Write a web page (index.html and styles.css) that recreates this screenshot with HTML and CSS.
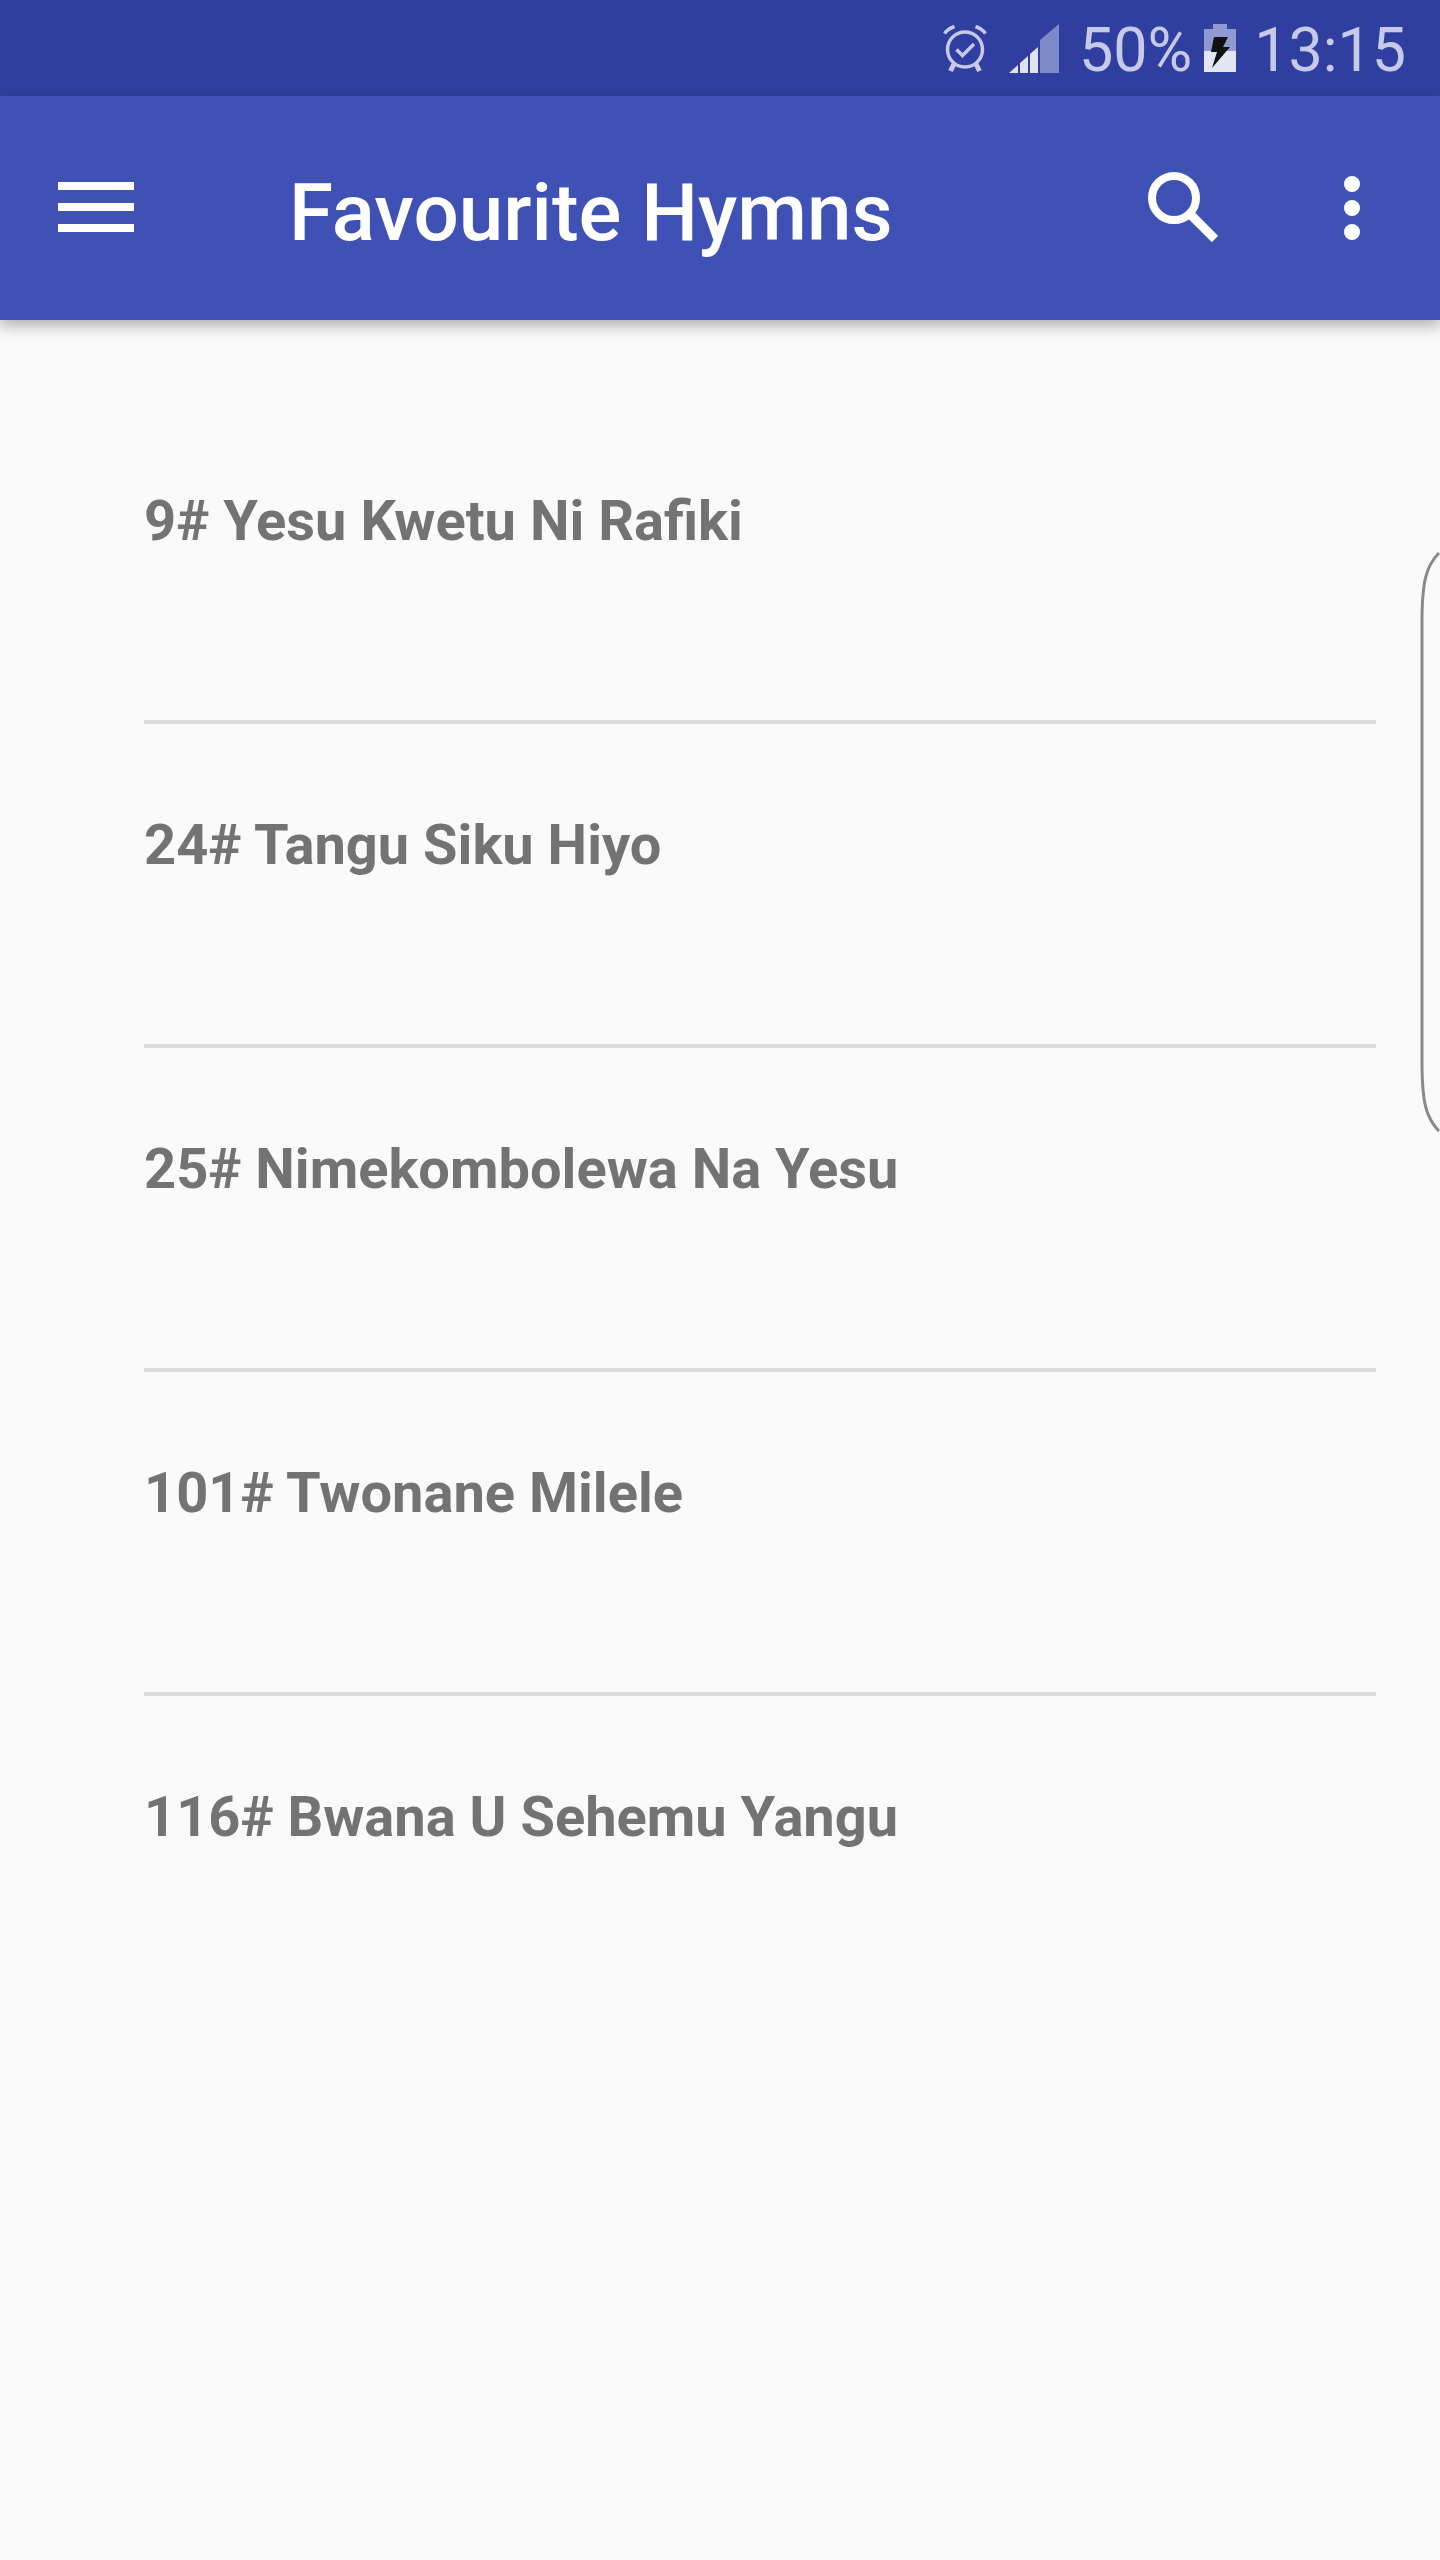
FILE: index.html
```html
<!DOCTYPE html>
<html lang="en">
<head>
<meta charset="utf-8">
<title>Favourite Hymns</title>
<link rel="stylesheet" href="styles.css">
</head>
<body>
<div class="page">
  <div class="status-bar">
    <svg class="ic-alarm" viewBox="0 0 44 48" width="44" height="48">
      <circle cx="22" cy="24.500" r="17.500" fill="none" stroke="#c5cae9" stroke-width="3.500"/>
      <path d="M13.500 24.500l6 6L31 19" fill="none" stroke="#c5cae9" stroke-width="3.500"/>
      <path d="M1.500 8.500C4 5 7 3 11.500 1.500M42.500 8.500C40 5 37 3 32.500 1.500" fill="none" stroke="#c5cae9" stroke-width="3.500"/>
      <path d="M11 39l-3.500 7M33 39l3.500 7" fill="none" stroke="#c5cae9" stroke-width="5"/>
    </svg>
    <svg class="ic-signal" viewBox="0 0 50 49" width="50" height="49">
      <path d="M31 16L50 0v49H31z" fill="#7d8ac8"/>
      <path d="M0 49L9 41v8zM11 39l8-7v17h-8zM21 30l8-7v26h-8z" fill="#dfe2f3"/>
    </svg>
    <span class="status-pct">50%</span>
    <svg class="ic-battery" viewBox="0 0 32 48" width="32" height="48">
      <path d="M9 0h14v5h9v25H0V5h9z" fill="#8f9ad2"/>
      <path d="M0 27h32v21H0z" fill="#e4e6f4"/>
      <path d="M10 13h14l-5 10h7L8 44l5-16H7z" fill="#111"/>
    </svg>
    <span class="status-time">13:15</span>
  </div>
  <header class="toolbar">
    <svg class="ic-menu" viewBox="0 0 76 50" width="76" height="50">
      <path d="M0 0h76v8H0zM0 21h76v8H0zM0 42h76v8H0z" fill="#fff"/>
    </svg>
    <h1 class="title">Favourite Hymns</h1>
    <svg class="ic-search" viewBox="0 0 70 70" width="70" height="70">
      <circle cx="26" cy="26" r="22" fill="none" stroke="#fff" stroke-width="8"/>
      <path d="M43 43l24 24" fill="none" stroke="#fff" stroke-width="9"/>
    </svg>
    <svg class="ic-more" viewBox="0 0 16 64" width="16" height="64">
      <circle cx="8" cy="8" r="8" fill="#fff"/>
      <circle cx="8" cy="32" r="8" fill="#fff"/>
      <circle cx="8" cy="56" r="8" fill="#fff"/>
    </svg>
  </header>
  <ul class="hymns">
    <li class="hymn">9# Yesu Kwetu Ni Rafiki</li>
    <li class="hymn">24# Tangu Siku Hiyo</li>
    <li class="hymn">25# Nimekombolewa Na Yesu</li>
    <li class="hymn">101# Twonane Milele</li>
    <li class="hymn hymn-last">116# Bwana U Sehemu Yangu</li>
  </ul>
  <svg class="edge-handle" viewBox="0 0 20 580" width="20" height="580">
    <path d="M19 1C6 14 2 30 2 70V510C2 550 6 566 19 579" fill="none" stroke="#8a8a8a" stroke-width="3"/>
  </svg>
</div>
</body>
</html>
```

FILE: styles.css
```css
* { box-sizing: border-box; }

html, body {
  margin: 0;
  padding: 0;
  background: #fafafa;
}

.page {
  position: relative;
  width: 1440px;
  height: 2560px;
  overflow: hidden;
  background: #fafafa;
  font-family: Roboto, "Liberation Sans", sans-serif;
}

.status-bar {
  display: flex;
  align-items: center;
  height: 96px;
  padding-left: 943px;
  background: #303f9f;
  color: #c5cae9;
  font-size: 61px;
  line-height: 96px;
}

.ic-alarm { flex: none; margin-top: 1px; }
.ic-signal { flex: none; margin-left: 22px; }
.status-pct { margin: 4px 0 0 20px; }
.ic-battery { flex: none; margin-left: 12px; }
.status-time { margin: 4px 0 0 18px; }

.toolbar {
  position: relative;
  display: flex;
  align-items: center;
  height: 224px;
  padding-left: 58px;
  background: #3f51b5;
  box-shadow: 0 6px 14px rgba(0, 0, 0, 0.3);
}

.ic-menu { flex: none; margin-top: -2px; }

.title {
  margin: 10px 0 0 155px;
  width: 615px;
  flex: none;
  color: #fff;
  font-size: 80px;
  font-weight: 500;
  line-height: 94px;
}

.ic-search { flex: none; margin: -2px 0 0 244px; }
.ic-more { flex: none; margin: 0 0 0 126px; }

.hymns {
  list-style: none;
  margin: 0;
  padding: 80px 64px 0 144px;
}

.hymn {
  height: 324px;
  padding-top: 88px;
  border-bottom: 4px solid #dcdcdc;
  color: #737373;
  font-size: 56px;
  font-weight: 700;
  line-height: 66px;
}

.hymn-last { border-bottom: 0; }

.edge-handle {
  position: absolute;
  top: 552px;
  right: 0;
}
```
